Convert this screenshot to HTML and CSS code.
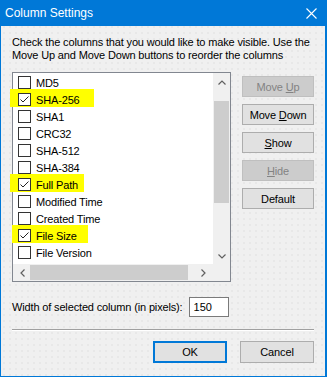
FILE: index.html
```html
<!DOCTYPE html>
<html lang="en">
<head>
	<meta charset="UTF-8">
	<title>Column Settings</title>
	<link rel="stylesheet" href="styles.css">
</head>
<body>
	<div class="window">
		<div class="titlebar">
			<span class="title">Column Settings</span>
			<svg class="close" width="11" height="11" viewBox="0 0 11 11"><path d="M0.5 0.5 L10.5 10.5 M10.5 0.5 L0.5 10.5" stroke="#fff" stroke-width="1.1" fill="none"/></svg>
		</div>

		<div class="content">
			<p class="intro">Check the columns that you would like to make visible. Use the Move Up and Move Down buttons to reorder the columns</p>

			<div class="main">
				<div class="list">
					<ul class="rows">
						<li class="item"><span class="box"></span><span class="name">MD5</span></li>
						<li class="item"><span class="mark mark-sha"></span><span class="box checked"><svg width="11" height="11" viewBox="0 0 11 11"><path d="M1.5 5.5 L4 8 L9.5 2.5" stroke="#222" stroke-width="1" fill="none"/></svg></span><span class="name">SHA-256</span></li>
						<li class="item"><span class="box"></span><span class="name">SHA1</span></li>
						<li class="item"><span class="box"></span><span class="name">CRC32</span></li>
						<li class="item"><span class="box"></span><span class="name">SHA-512</span></li>
						<li class="item"><span class="box"></span><span class="name">SHA-384</span></li>
						<li class="item"><span class="mark mark-path"></span><span class="box checked"><svg width="11" height="11" viewBox="0 0 11 11"><path d="M1.5 5.5 L4 8 L9.5 2.5" stroke="#222" stroke-width="1" fill="none"/></svg></span><span class="name">Full Path</span></li>
						<li class="item"><span class="box"></span><span class="name">Modified Time</span></li>
						<li class="item"><span class="box"></span><span class="name">Created Time</span></li>
						<li class="item"><span class="mark mark-size"></span><span class="box checked"><svg width="11" height="11" viewBox="0 0 11 11"><path d="M1.5 5.5 L4 8 L9.5 2.5" stroke="#222" stroke-width="1" fill="none"/></svg></span><span class="name">File Size</span></li>
						<li class="item"><span class="box"></span><span class="name">File Version</span></li>
					</ul>
					<div class="vscroll">
						<svg class="arrow" width="8" height="5" viewBox="0 0 8 5"><path d="M0.5 4.5 L4 1 L7.5 4.5" stroke="#606060" stroke-width="1.2" fill="none"/></svg>
						<div class="vtrack"><div class="vthumb"></div></div>
						<svg class="arrow" width="8" height="5" viewBox="0 0 8 5"><path d="M0.5 0.5 L4 4 L7.5 0.5" stroke="#606060" stroke-width="1.2" fill="none"/></svg>
					</div>
					<div class="hscroll">
						<svg class="arrow" width="5" height="8" viewBox="0 0 5 8"><path d="M4.5 0.5 L1 4 L4.5 7.5" stroke="#606060" stroke-width="1.2" fill="none"/></svg>
						<div class="htrack"><div class="hthumb"></div></div>
						<svg class="arrow" width="5" height="8" viewBox="0 0 5 8"><path d="M0.5 0.5 L4 4 L0.5 7.5" stroke="#606060" stroke-width="1.2" fill="none"/></svg>
					</div>
					<div class="corner"></div>
				</div>

				<div class="side">
					<button class="btn" disabled>Move <u>U</u>p</button>
					<button class="btn">Move <u>D</u>own</button>
					<button class="btn"><u>S</u>how</button>
					<button class="btn" disabled><u>H</u>ide</button>
					<button class="btn">Default</button>
				</div>
			</div>

			<div class="width-row">
				<label for="colWidth">Width of selected column (in pixels):</label>
				<input id="colWidth" class="field" type="text" value="150">
			</div>

			<div class="sep"></div>

			<div class="actions">
				<button class="btn btn-default">OK</button>
				<button class="btn">Cancel</button>
			</div>
		</div>
	</div>
</body>
</html>
```

FILE: styles.css
```css
body {
	margin: 0;
	font-family: "Liberation Sans", Arial, sans-serif;
	font-size: 11px;
	letter-spacing: -0.15px;
	color: #000;
}

.window {
	width: 327px; height: 377px;
	box-sizing: border-box;
	border: 1px solid #0078d7;
	border-top: 0;
	border-right-width: 2px;
	background-color: #f0f0f0;
	background-image: radial-gradient(circle, #e0e0e0 0.5px, transparent 0.9px);
	background-size: 6px 6px;
	display: flex;
	flex-direction: column;
}

.titlebar {
	height: 26px;
	background: #0078d7;
	color: #fff;
	display: flex;
	align-items: center;
	justify-content: space-between;
	padding: 0 8px 0 4px;
}
.title {
	font-size: 12px;
	letter-spacing: 0;
}

.content {
	padding: 10px 11px 0 11px;
	display: flex;
	flex-direction: column;
}

.intro {
	margin: 0;
	line-height: 13px;
}

.main {
	display: flex;
	gap: 11px;
	margin-top: 10px;
}

.list {
	width: 219px; height: 210px;
	box-sizing: border-box;
	border: 1px solid #828790;
	background: #fff;
	display: grid;
	grid-template-columns: 1fr 17px;
	grid-template-rows: 1fr 17px;
}

.rows {
	list-style: none;
	margin: 0;
	padding: 1px 0 0 0;
}
.item {
	position: relative;
	height: 17px;
	display: flex;
	align-items: center;
	padding-left: 5px;
}
.box {
	position: relative;
	width: 13px; height: 13px;
	box-sizing: border-box;
	border: 1px solid #333;
	background: #fff;
	margin-right: 5px;
	display: flex;
	align-items: center;
	justify-content: center;
}
.name {
	position: relative;
	white-space: nowrap;
}
.mark {
	position: absolute;
	top: -2px;
	height: 18px;
	background: #ffff00;
}
.mark-sha { left: -3px; width: 84px; }
.mark-path { left: -3px; width: 74px; }
.mark-size { left: -1px; width: 76px; }

.vscroll {
	background: #f0f0f0;
	display: flex;
	flex-direction: column;
	align-items: center;
	padding: 7px 0 5px;
	gap: 6px;
}
.vtrack {
	flex: 1;
	width: 100%;
	padding-top: 10px;
	padding-bottom: 45px;
	box-sizing: border-box;
	display: flex;
}
.vthumb {
	flex: 1;
	margin: 0 1px;
	background: #cdcdcd;
}

.hscroll {
	background: #f0f0f0;
	display: flex;
	align-items: center;
	padding: 0 7px;
	gap: 5px;
}
.htrack {
	flex: 1;
	height: 100%;
	padding-right: 8px;
	box-sizing: border-box;
	display: flex;
}
.hthumb {
	flex: 1;
	margin: 1px 0;
	background: #cdcdcd;
}
.corner {
	background: #f0f0f0;
}

.side {
	display: flex;
	flex-direction: column;
	gap: 7px;
	padding-top: 4px;
}

.btn {
	width: 72px; height: 21px;
	box-sizing: border-box;
	padding: 0;
	border: 1px solid #adadad;
	background: #e1e1e1;
	font-family: inherit;
	font-size: 11px;
	letter-spacing: -0.15px;
	color: #000;
}
.btn:disabled {
	background: #cccccc;
	border-color: #bfbfbf;
	color: #838383;
}
.btn u { text-underline-offset: 1px; }

.width-row {
	display: flex;
	align-items: center;
	gap: 6px;
	margin-top: 15px;
}
.field {
	width: 40px; height: 20px;
	box-sizing: border-box;
	border: 1px solid #7a7a7a;
	padding: 0 4px;
	font-family: inherit;
	font-size: 11px;
	background: #fff;
	color: #000;
}

.sep {
	margin-top: 12px;
	height: 0;
	border-top: 1px solid #a0a0a0;
	border-bottom: 1px solid #fff;
}

.actions {
	display: flex;
	justify-content: flex-end;
	gap: 13px;
	margin-top: 10px;
}
.actions .btn {
	width: 74px; height: 22px;
}
.btn-default {
	border: 2px solid #0078d7;
}
```
